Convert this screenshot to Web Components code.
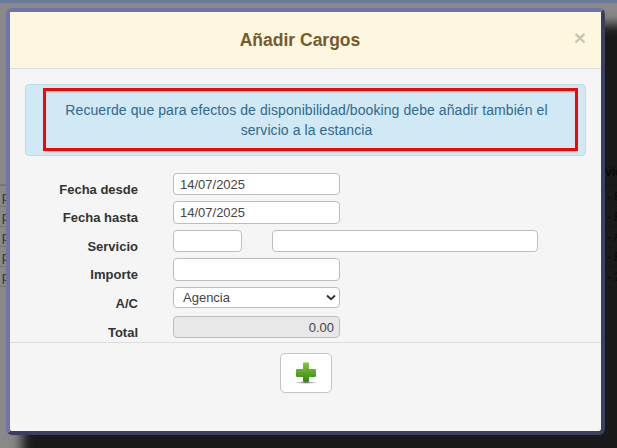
<!DOCTYPE html>
<html lang="es">
<head>
<meta charset="utf-8">
<title>Añadir Cargos</title>
<style>
  html, body { margin: 0; height: 100%; overflow: hidden; background: #898989; }
  body { font-family: "Liberation Sans", Arial, sans-serif; color: #333; }
</style>
</head>
<body>
<page-backdrop></page-backdrop>
<modal-dialog>
  <span slot="title">Añadir Cargos</span>
  <info-alert>Recuerde que para efectos de disponibilidad/booking debe añadir también el<br>servicio a la estancia</info-alert>
  <form-row label="Fecha desde" height="22"><text-field value="14/07/2025"></text-field></form-row>
  <form-row label="Fecha hasta" height="23"><text-field value="14/07/2025"></text-field></form-row>
  <form-row label="Servicio" height="22">
    <text-field width="69"></text-field>
    <text-field width="266"></text-field>
  </form-row>
  <form-row label="Importe" height="23"><text-field></text-field></form-row>
  <form-row label="A/C" height="23"><select-field value="Agencia"></select-field></form-row>
  <form-row label="Total" height="22"><text-field value="0.00" readonly></text-field></form-row>
  <add-button slot="footer"></add-button>
</modal-dialog>

<script>
/**
 * The dimmed page behind the dialog. Only thin strips of it show.
 */
class PageBackdrop extends HTMLElement {
  constructor() {
    super();
    this.attachShadow({ mode: 'open' });
    const cells = ['- F', '- F', '- A', '- F', '- 2'];
    const rows = cells.map(c => `<div class="row"><span>p</span><span>${c}</span></div>`).join('');
    this.shadowRoot.innerHTML = `
      <style>
        :host { display: block; font: 12px "Liberation Sans", Arial, sans-serif; color: #2e2e2e; }
        .nav { height: 3px; background: #6b7a9a; }
        .head {
          height: 183px;
          box-sizing: border-box;
          display: grid;
          grid-template-columns: 605px 1fr;
          align-items: end;
          padding-bottom: 5px;
          border-bottom: 2px solid #777;
          font-weight: bold;
          overflow: hidden;
          white-space: nowrap;
        }
        .row {
          height: 20px;
          box-sizing: border-box;
          display: grid;
          grid-template-columns: 605px 1fr;
          align-items: center;
          padding-left: 2px;
          border-bottom: 1px solid #767676;
          white-space: nowrap;
          overflow: hidden;
        }
        .rows { margin-top: 1px; }
      </style>
      <div class="nav"></div>
      <div class="head"><span></span><span>vic</span></div>
      <div class="rows">${rows}</div>
    `;
  }
}

/**
 * Dialog window with a heading, a body and a footer.
 */
class ModalDialog extends HTMLElement {
  constructor() {
    super();
    this.attachShadow({ mode: 'open' });
    this.shadowRoot.innerHTML = `
      <style>
        :host {
          position: absolute;
          left: 6px;
          top: 8px;
          width: 599px;
          height: 427px;
          box-sizing: border-box;
          display: flex;
          flex-direction: column;
          background: #f5f5f5;
          border: 4px solid;
          border-color: #6f74aa #3a3f60 #3a3f60 #6f74aa;
          border-radius: 6px;
          box-shadow: 46px 46px 12px 30px rgba(0, 0, 0, .82);
        }
        header {
          height: 57px;
          box-sizing: border-box;
          flex: none;
          display: flex;
          align-items: center;
          justify-content: center;
          position: relative;
          padding-right: 11px;
          background: #fdf7df;
          border-bottom: 1px solid #dddddd;
          font-size: 17.5px;
          font-weight: bold;
          color: #765a2e;
        }
        .close {
          position: absolute;
          right: 15px;
          top: 15px;
          font-size: 21px;
          line-height: 21px;
          color: #c9c6b6;
        }
        .body {
          flex: none;
          padding: 15px 15px 0;
        }
        .fields {
          display: flex;
          flex-direction: column;
          gap: 6px;
        }
        footer {
          flex: 1;
          margin-top: 4px;
          padding-top: 10px;
          border-top: 1px solid #dddddd;
          display: flex;
          justify-content: center;
          align-items: flex-start;
        }
      </style>
      <header><slot name="title"></slot><span class="close">×</span></header>
      <div class="body"><div class="fields"><slot></slot></div></div>
      <footer><slot name="footer"></slot></footer>
    `;
  }
}

/**
 * Blue notice, with the red marking drawn round its text.
 */
class InfoAlert extends HTMLElement {
  constructor() {
    super();
    this.attachShadow({ mode: 'open' });
    this.shadowRoot.innerHTML = `
      <style>
        :host {
          display: block;
          height: 72px;
          margin-bottom: 11px;
          box-sizing: border-box;
          padding: 3px 7px 3px 17px;
          background: #d1e8f5;
          border: 1px solid #b6e2ee;
          border-radius: 4px;
          color: #2f6a8c;
          font-size: 14px;
          letter-spacing: .08px;
          line-height: 20px;
          text-align: center;
        }
        .mark {
          height: 63px;
          box-sizing: border-box;
          border: 3px solid #ff0000;
          padding: 9px 23px 0 15px;
        }
      </style>
      <div class="mark"><slot></slot></div>
    `;
  }
}

/**
 * Label on the left, controls on the right.
 */
class FormRow extends HTMLElement {
  constructor() {
    super();
    this.attachShadow({ mode: 'open' });
    this.shadowRoot.innerHTML = `
      <style>
        :host {
          display: grid;
          grid-template-columns: 113px 1fr;
          grid-template-rows: minmax(0, 1fr);
          column-gap: 35px;
          height: ${this.getAttribute('height') || 22}px;
        }
        label {
          text-align: right;
          font-size: 13px;
          font-weight: bold;
          color: #333;
          line-height: 22px;
          padding-top: 6px;
          white-space: nowrap;
        }
        .controls { display: flex; gap: 30px; height: 100%; }
      </style>
      <label>${this.getAttribute('label') || ''}</label>
      <div class="controls"><slot></slot></div>
    `;
  }
}

/**
 * Single line text input.
 */
class TextField extends HTMLElement {
  constructor() {
    super();
    this.attachShadow({ mode: 'open' });
    const readonly = this.hasAttribute('readonly');
    this.shadowRoot.innerHTML = `
      <style>
        :host { display: block; width: ${this.getAttribute('width') || 167}px; height: 100%; }
        input {
          display: block;
          width: 100%;
          height: 100%;
          box-sizing: border-box;
          margin: 0;
          padding: 0 5px 0 6px;
          border: 1px solid #bdbdbd;
          border-radius: 4px;
          background: #fff;
          font: 13px "Liberation Sans", Arial, sans-serif;
          color: #444;
          outline: none;
        }
        input[readonly] { background: #e8e8e8; text-align: right; }
      </style>
      <input type="text" value="${this.getAttribute('value') || ''}" ${readonly ? 'readonly' : ''}>
    `;
  }
}

/**
 * Dropdown with a drawn chevron.
 */
class SelectField extends HTMLElement {
  constructor() {
    super();
    this.attachShadow({ mode: 'open' });
    this.shadowRoot.innerHTML = `
      <style>
        :host { display: block; position: relative; width: 167px; height: 21px; }
        select {
          display: block;
          width: 100%;
          height: 100%;
          box-sizing: border-box;
          margin: 0;
          padding: 0 0 0 9px;
          border: 1px solid #bdbdbd;
          border-radius: 4px;
          background: #fff;
          appearance: none;
          font: 13px "Liberation Sans", Arial, sans-serif;
          color: #444;
          outline: none;
        }
        svg { position: absolute; right: 4px; top: 7px; pointer-events: none; }
      </style>
      <select><option>${this.getAttribute('value')}</option></select>
      <svg width="10" height="7" viewBox="0 0 10 7">
        <path d="M1 1.5 L5 5.2 L9 1.5" fill="none" stroke="#333" stroke-width="1.9"/>
      </svg>
    `;
  }
}

/**
 * Footer button with the green plus.
 */
class AddButton extends HTMLElement {
  constructor() {
    super();
    this.attachShadow({ mode: 'open' });
    this.shadowRoot.innerHTML = `
      <style>
        :host { display: block; }
        button {
          display: flex;
          align-items: center;
          justify-content: center;
          width: 52px;
          height: 40px;
          box-sizing: border-box;
          padding: 0;
          background: #fff;
          border: 1px solid #c4c4c4;
          border-radius: 5px;
        }
      </style>
      <button type="button" aria-label="Añadir">
        <svg width="24" height="24" viewBox="0 0 24 24">
          <defs>
            <linearGradient id="g" x1="0" y1="0" x2="0" y2="1">
              <stop offset="0" stop-color="#8cc63a"/>
              <stop offset="1" stop-color="#2c8a12"/>
            </linearGradient>
            <radialGradient id="s">
              <stop offset="0" stop-color="#777"/>
              <stop offset="1" stop-color="#777" stop-opacity="0"/>
            </radialGradient>
          </defs>
          <ellipse cx="12" cy="21.500" rx="12" ry="1.400" fill="url(#s)"/>
          <path fill="url(#g)" d="M10 1.5 h4 a1 1 0 0 1 1 1 V8 h6 a1 1 0 0 1 1 1 v6 a1 1 0 0 1 -1 1 h-6 v4 a1.200 1.200 0 0 1 -1 1 h-4 a1.200 1.200 0 0 1 -1 -1 v-4 H3 a1 1 0 0 1 -1 -1 V9 a1 1 0 0 1 1 -1 h6 V2.500 a1 1 0 0 1 1 -1 z"/>
        </svg>
      </button>
    `;
  }
}

customElements.define('page-backdrop', PageBackdrop);
customElements.define('modal-dialog', ModalDialog);
customElements.define('info-alert', InfoAlert);
customElements.define('form-row', FormRow);
customElements.define('text-field', TextField);
customElements.define('select-field', SelectField);
customElements.define('add-button', AddButton);
</script>
</body>
</html>
